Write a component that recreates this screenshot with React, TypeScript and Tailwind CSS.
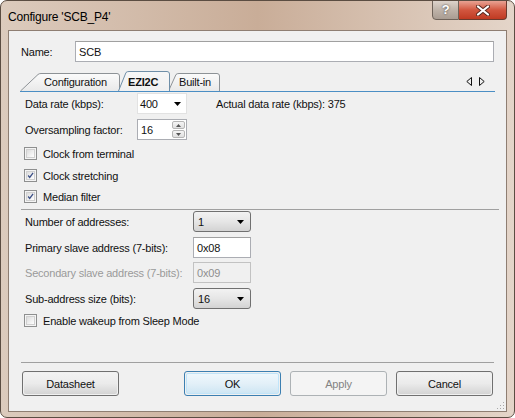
import React from "react";

const font = "font-['Liberation_Sans',Arial,sans-serif] tracking-[-0.2px]";
const txt = "text-[11px] leading-[14px] whitespace-nowrap";

const DownArrow = () => (
    <svg width="7" height="4" viewBox="0 0 7 4"><path d="M0 0h7L3.5 4z" fill="#000" /></svg>
);

const CheckBox = ({ checked, label }: { checked?: boolean, label: string }) => (
    <div className="flex flex-row items-center h-[21px]">
        <div className="w-[13px] h-[13px] border border-[#8e8f8f] bg-[#f4f4f4] flex items-center justify-center">
            <div className="w-[9px] h-[9px] border border-[#d0d0d0] bg-gradient-to-br from-[#dcdcdc] to-[#ffffff] flex items-center justify-center">
                {checked && (
                    <svg width="9" height="9" viewBox="0 0 9 9" className="-mt-[1px]">
                        <path d="M1.5 4.5 L3.5 7 L7.8 1.2" fill="none" stroke="#3b4f86" strokeWidth="1.6" />
                    </svg>
                )}
            </div>
        </div>
        <span className={`ml-[6px] ${txt}`}>{label}</span>
    </div>
);

const Combo = ({ value }: { value: string }) => (
    <div className="w-[58px] h-[21px] rounded-[3px] border border-[#707070] bg-gradient-to-b from-[#f2f2f2] via-[#e6e6e6] to-[#d3d3d3] flex flex-row items-center justify-between pl-[4px] pr-[6px]">
        <span className={txt}>{value}</span>
        <DownArrow />
    </div>
);

const TextBox = ({ value, disabled, width }: { value: string, disabled?: boolean, width: string }) => (
    <div className={`${width} h-[21px] border flex items-center pl-[3px] ${txt} ${disabled ? "border-[#c2c2c2] bg-[#f0f0f0] text-[#8e8e8e]" : "border-[#abadb3] border-t-[#a0a0a0] bg-white"}`}>
        {value}
    </div>
);

const Button = ({ label, variant }: { label: string, variant?: "default" | "disabled" }) => {
    if (variant === "default") {
        return (
            <div className="w-[97px] h-[25px] rounded-[3px] border border-[#3c7fb1] p-[1px]">
                <div className={`w-full h-full rounded-[2px] border border-[#c0e4f9] bg-gradient-to-b from-[#eef7fc] via-[#e3f0f8] to-[#cfe6f3] flex items-center justify-center ${txt}`}>{label}</div>
            </div>
        );
    }
    if (variant === "disabled") {
        return (
            <div className={`w-[97px] h-[25px] rounded-[3px] border border-[#adb2b5] bg-[#f4f4f4] flex items-center justify-center ${txt} text-[#838383]`}>{label}</div>
        );
    }
    return (
        <div className="w-[97px] h-[25px] rounded-[3px] border border-[#707070] p-[1px]">
            <div className={`w-full h-full rounded-[2px] bg-gradient-to-b from-[#f2f2f2] via-[#ebebeb] to-[#d4d4d4] flex items-center justify-center ${txt}`}>{label}</div>
        </div>
    );
};

const Tab = ({ label, active, width, first }: { label: string, active?: boolean, width: number, first?: boolean }) => {
    const h = active ? 20 : 18;
    const slant = first ? 18 : 8;
    return (
        <div className={`relative flex items-end ${first ? "" : "-ml-[2px]"}`} style={{ width, height: h, zIndex: active ? 2 : 1 }}>
            <svg className="absolute inset-0" width={width} height={h} viewBox={`0 0 ${width} ${h}`}>
                <defs>
                    <linearGradient id={`g-${label}`} x1="0" y1="0" x2="0" y2="1">
                        <stop offset="0" stopColor={active ? "#f7f7f7" : "#fbfbfb"} />
                        <stop offset="1" stopColor={active ? "#f0f0f0" : "#e9e9e9"} />
                    </linearGradient>
                </defs>
                <path
                    d={`M0.5 ${h} L${slant} 1.5 Q${slant + 1} 0.5 ${slant + 3} 0.5 L${width - 3} 0.5 Q${width - 0.5} 0.5 ${width - 0.5} 3 L${width - 0.5} ${h}`}
                    fill={`url(#g-${label})`}
                    stroke={active ? "#6f8fa8" : "#8d9296"}
                    strokeWidth="1"
                />
            </svg>
            <span className={`relative w-full ${txt} text-[11.5px] pb-[2px] ${active ? "font-bold" : ""}`} style={{ paddingLeft: first ? 24 : active ? 10 : 11 }}>{label}</span>
        </div>
    );
};

const Row = ({ label, children, mt, disabled, labelW = "w-[112px]" }: { label: string, children: React.ReactNode, mt: string, disabled?: boolean, labelW?: string }) => (
    <div className={`flex flex-row items-center ${mt}`}>
        <span className={`${labelW} ${txt} ${disabled ? "text-[#9a9a9a]" : ""}`}>{label}</span>
        {children}
    </div>
);

export default function App() {
    return (
        <div className={`w-[515px] h-[418px] bg-white ${font} text-[#111]`}>
            <div className="w-[515px] h-[418px] rounded-[7px] border border-[#5b4d42] bg-gradient-to-r from-[#dccbbd] via-[#c9ad98] to-[#e4d5c9] flex flex-col overflow-hidden">
                <div className="h-[29px] flex flex-row items-start justify-between">
                    <span className="ml-[7px] mt-[7px] text-[12px] text-black whitespace-nowrap">Configure 'SCB_P4'</span>
                    <div className="flex flex-row mr-[7px] -mt-[1px]">
                        <div className="w-[27px] h-[20px] rounded-bl-[4px] border border-[#6e6259] bg-gradient-to-b from-[#ddd3cb] via-[#bfb3a9] to-[#a99c92] flex items-center justify-center">
                            <span className="text-[13px] font-bold text-white [text-shadow:0_0_2px_#333]">?</span>
                        </div>
                        <div className="w-[48px] h-[20px] rounded-br-[4px] border border-l-0 border-[#6b3a2e] bg-gradient-to-b from-[#e8a293] via-[#d2563f] to-[#c03a22] flex items-center justify-center">
                            <svg width="14" height="11" viewBox="0 0 14 11">
                                <path d="M2 1.5 L12 9.5 M12 1.5 L2 9.5" stroke="#5a2a20" strokeWidth="4" strokeLinecap="round" />
                                <path d="M2 1.5 L12 9.5 M12 1.5 L2 9.5" stroke="#fff" strokeWidth="2.2" strokeLinecap="round" />
                            </svg>
                        </div>
                    </div>
                </div>
                <div className="mx-[7px] h-[382px] border border-[#8e7e72] bg-[#f0f0f0] flex flex-col relative">
                    <div className="flex flex-row items-center mt-[10px] ml-[12px] mr-[12px]">
                        <span className={`w-[54px] ${txt}`}>Name:</span>
                        <TextBox value="SCB" width="flex-1" />
                    </div>
                    <div className="mt-[10px] mx-[11px] flex flex-row items-end border-b border-[#4b8ec4] h-[20px]">
                        <div className="flex flex-row items-end">
                            <Tab label="Configuration" width={100} first />
                            <Tab label="EZI2C" width={52} active />
                            <Tab label="Built-in" width={52} />
                        </div>
                        <div className="ml-auto mb-[5px] mr-[10px] flex flex-row gap-[7px]">
                            <svg width="6" height="9" viewBox="0 0 6 9"><path d="M5.5 0.5 L0.8 4.5 L5.5 8.5 Z" fill="none" stroke="#111" /></svg>
                            <svg width="6" height="9" viewBox="0 0 6 9"><path d="M0.5 0.5 L5.2 4.5 L0.5 8.5 Z" fill="none" stroke="#111" /></svg>
                        </div>
                    </div>
                    <div className="ml-[16px] flex flex-col">
                        <Row label="Data rate (kbps):" mt="mt-[1px]">
                            <div className="w-[50px] h-[21px] border border-[#e2e2e2] bg-white flex flex-row items-center justify-between pl-[2px] pr-[5px]">
                                <span className={txt}>400</span>
                                <DownArrow />
                            </div>
                            <span className={`ml-[29px] ${txt}`}>Actual data rate (kbps): 375</span>
                        </Row>
                        <Row label="Oversampling factor:" mt="mt-[5px]">
                            <div className="w-[50px] h-[21px] border border-[#abadb3] bg-white flex flex-row">
                                <span className={`flex-1 pl-[3px] ${txt} flex items-center`}>16</span>
                                <div className="w-[15px] flex flex-col p-[1px] gap-[1px]">
                                    <div className="flex-1 rounded-[2px] border border-[#b5b5b5] bg-gradient-to-b from-[#f5f5f5] to-[#e0e0e0] flex items-center justify-center">
                                        <svg width="5" height="3" viewBox="0 0 5 3"><path d="M0 3h5L2.5 0z" fill="#555" /></svg>
                                    </div>
                                    <div className="flex-1 rounded-[2px] border border-[#b5b5b5] bg-gradient-to-b from-[#f5f5f5] to-[#e0e0e0] flex items-center justify-center">
                                        <svg width="5" height="3" viewBox="0 0 5 3"><path d="M0 0h5L2.5 3z" fill="#555" /></svg>
                                    </div>
                                </div>
                            </div>
                        </Row>
                        <div className="mt-[3px] -ml-[1px] flex flex-col">
                            <CheckBox label="Clock from terminal" />
                            <div className="h-[1px]" />
                            <CheckBox label="Clock stretching" checked />
                            <CheckBox label="Median filter" checked />
                        </div>
                    </div>
                    <div className="mt-[2px] ml-[12px] mr-[7px] h-[1px] bg-[#a0a0a0]" />
                    <div className="ml-[16px] flex flex-col">
                        <Row label="Number of addresses:" mt="mt-[1px]" labelW="w-[168px]"><Combo value="1" /></Row>
                        <Row label="Primary slave address (7-bits):" mt="mt-[5px]" labelW="w-[168px]"><TextBox value="0x08" width="w-[58px]" /></Row>
                        <Row label="Secondary slave address (7-bits):" mt="mt-[4px]" labelW="w-[168px]" disabled><TextBox value="0x09" width="w-[58px]" disabled /></Row>
                        <Row label="Sub-address size (bits):" mt="mt-[5px]" labelW="w-[168px]"><Combo value="16" /></Row>
                        <div className="mt-[1px] -ml-[1px]"><CheckBox label="Enable wakeup from Sleep Mode" /></div>
                    </div>
                    <div className="mt-[31px] ml-[12px] mr-[12px] h-[1px] bg-[#a0a0a0]" />
                    <div className="mt-[8px] ml-[13px] mr-[13px] flex flex-row items-center">
                        <Button label="Datasheet" />
                        <div className="ml-auto flex flex-row gap-[9px]">
                            <Button label="OK" variant="default" />
                            <Button label="Apply" variant="disabled" />
                            <Button label="Cancel" />
                        </div>
                    </div>
                    <svg className="absolute right-[1px] bottom-[1px]" width="8" height="8" viewBox="0 0 8 8">
                        <g fill="#a8a8a8">
                            <rect x="6" y="0" width="1" height="1" />
                            <rect x="3" y="3" width="1" height="1" />
                            <rect x="6" y="3" width="1" height="1" />
                            <rect x="0" y="6" width="1" height="1" />
                            <rect x="3" y="6" width="1" height="1" />
                            <rect x="6" y="6" width="1" height="1" />
                        </g>
                    </svg>
                </div>
            </div>
        </div>
    );
}
